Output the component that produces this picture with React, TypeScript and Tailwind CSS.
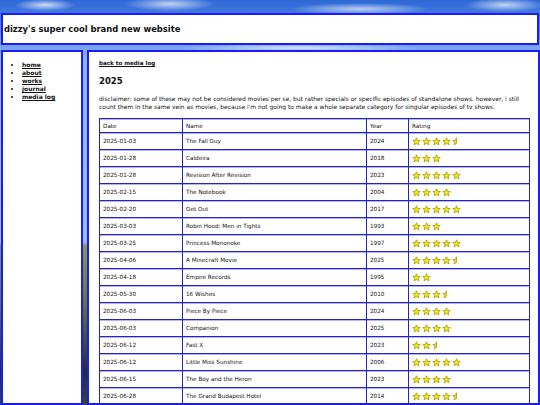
type Movie = [string, string, string, number];

const movies: Movie[] = [
  ["2025-01-03", "The Fall Guy", "2024", 4.5],
  ["2025-01-28", "Caldeira", "2018", 3],
  ["2025-01-28", "Revision After Revision", "2023", 5],
  ["2025-02-15", "The Notebook", "2004", 4],
  ["2025-02-20", "Get Out", "2017", 5],
  ["2025-03-03", "Robin Hood: Men in Tights", "1993", 3],
  ["2025-03-25", "Princess Mononoke", "1997", 5],
  ["2025-04-06", "A Minecraft Movie", "2025", 4.5],
  ["2025-04-18", "Empire Records", "1995", 2],
  ["2025-05-30", "16 Wishes", "2010", 3.5],
  ["2025-06-03", "Piece By Piece", "2024", 4],
  ["2025-06-03", "Companion", "2025", 4],
  ["2025-06-12", "Fast X", "2023", 2.5],
  ["2025-06-12", "Little Miss Sunshine", "2006", 5],
  ["2025-06-15", "The Boy and the Heron", "2023", 4],
  ["2025-06-28", "The Grand Budapest Hotel", "2014", 4.5],
];

const STAR = "12,2 15,9 22,9.3 16.5,14 18.5,21 12,17 5.5,21 7.5,14 2,9.3 9,9";
const HALF = "12,2 9,9 2,9.3 7.5,14 5.5,21 12,17";

function Star({ half }: { half?: boolean }) {
  return (
    <svg viewBox="0 0 24 24" className="w-[9px] h-[9px] shrink-0">
      <polygon
        points={half ? HALF : STAR}
        fill="#f4e814"
        stroke="#a99a12"
        strokeWidth="2.2"
        strokeLinejoin="round"
      />
    </svg>
  );
}

function Rating({ value }: { value: number }) {
  const full = Math.floor(value);
  return (
    <div className="flex items-center gap-[1px]">
      {Array.from({ length: full }).map((_, i) => (
        <Star key={i} />
      ))}
      {value > full && <Star half />}
    </div>
  );
}

const cell =
  "border-l border-b border-[#2424c0] shadow-[inset_0_1px_0_#b4b4f2] pl-[3px] text-left font-normal";

export default function App() {
  return (
    <div className="h-screen overflow-hidden pl-px pr-px pt-[13px] flex flex-col gap-[5px] font-['DejaVu_Sans',sans-serif] text-[#111] bg-[radial-gradient(ellipse_30px_6px_at_45px_5px,rgba(255,255,255,0.75),transparent),radial-gradient(ellipse_45px_7px_at_170px_4px,rgba(255,255,255,0.7),transparent),radial-gradient(ellipse_70px_6px_at_360px_9px,rgba(255,255,255,0.65),transparent),radial-gradient(ellipse_40px_7px_at_505px_5px,rgba(255,255,255,0.7),transparent),radial-gradient(ellipse_120px_4px_at_300px_48px,rgba(255,255,255,0.7),transparent),linear-gradient(to_bottom,#2f68d6_0px,#5a8ee8_30px,#8fb4f6_60px,#9cbcf6_242px,#869a34_246px,#6a7a2e_300px,#262f2a_372px,#3b4a22_405px)]">
      <header className="shrink-0 h-[32px] border-2 border-[#1a1aff] bg-white flex items-center px-[1px]">
        <h1 className="font-bold text-[8.4px]">dizzy's super cool brand new website</h1>
      </header>
      <div className="flex-1 min-h-0 flex gap-[4px]">
        <nav className="w-[82px] shrink-0 border-2 border-[#1a1aff] bg-white pt-[9px]">
          <ul className="list-disc pl-[19px] text-[6px] leading-[8px] font-bold">
            {["home", "about", "works", "journal", "media log"].map((l) => (
              <li key={l}>
                <a href="#" className="underline">{l}</a>
              </li>
            ))}
          </ul>
        </nav>
        <main className="flex-1 border-2 border-[#1a1aff] bg-white pl-[10px] pr-[8px] pt-[7px] leading-[8px]">
          <a href="#" className="block font-bold underline text-[5.6px]">back to media log</a>
          <h2 className="mt-[8px] font-bold text-[8.5px] leading-[12px]">2025</h2>
          <p className="mt-[8px] text-[5.95px]">
            disclaimer: some of these may not be considered movies per se, but rather specials or specific episodes of standalone shows. however, i still count them in the same vein as movies, because i'm not going to make a whole separate category for singular episodes of tv shows.
          </p>
          <table className="mt-[7px] w-[430px] text-[5.7px] border-separate border-spacing-0 border-t border-r border-[#2424c0] table-fixed">
            <colgroup>
              <col className="w-[83px]" />
              <col className="w-[184px]" />
              <col className="w-[42px]" />
              <col className="w-[121px]" />
            </colgroup>
            <thead>
              <tr className="h-[14px]">
                <th className={cell}>Date</th>
                <th className={cell}>Name</th>
                <th className={cell}>Year</th>
                <th className={cell}>Rating</th>
              </tr>
            </thead>
            <tbody>
              {movies.map(([d, n, y, r], i) => (
                <tr key={i} className="h-[17px]">
                  <td className={cell}>{d}</td>
                  <td className={cell}>{n}</td>
                  <td className={cell}>{y}</td>
                  <td className={cell}>
                    <Rating value={r} />
                  </td>
                </tr>
              ))}
              <tr className="h-[17px]">
                <td className={cell}></td>
                <td className={cell}></td>
                <td className={cell}></td>
                <td className={cell}></td>
              </tr>
            </tbody>
          </table>
        </main>
      </div>
    </div>
  );
}
